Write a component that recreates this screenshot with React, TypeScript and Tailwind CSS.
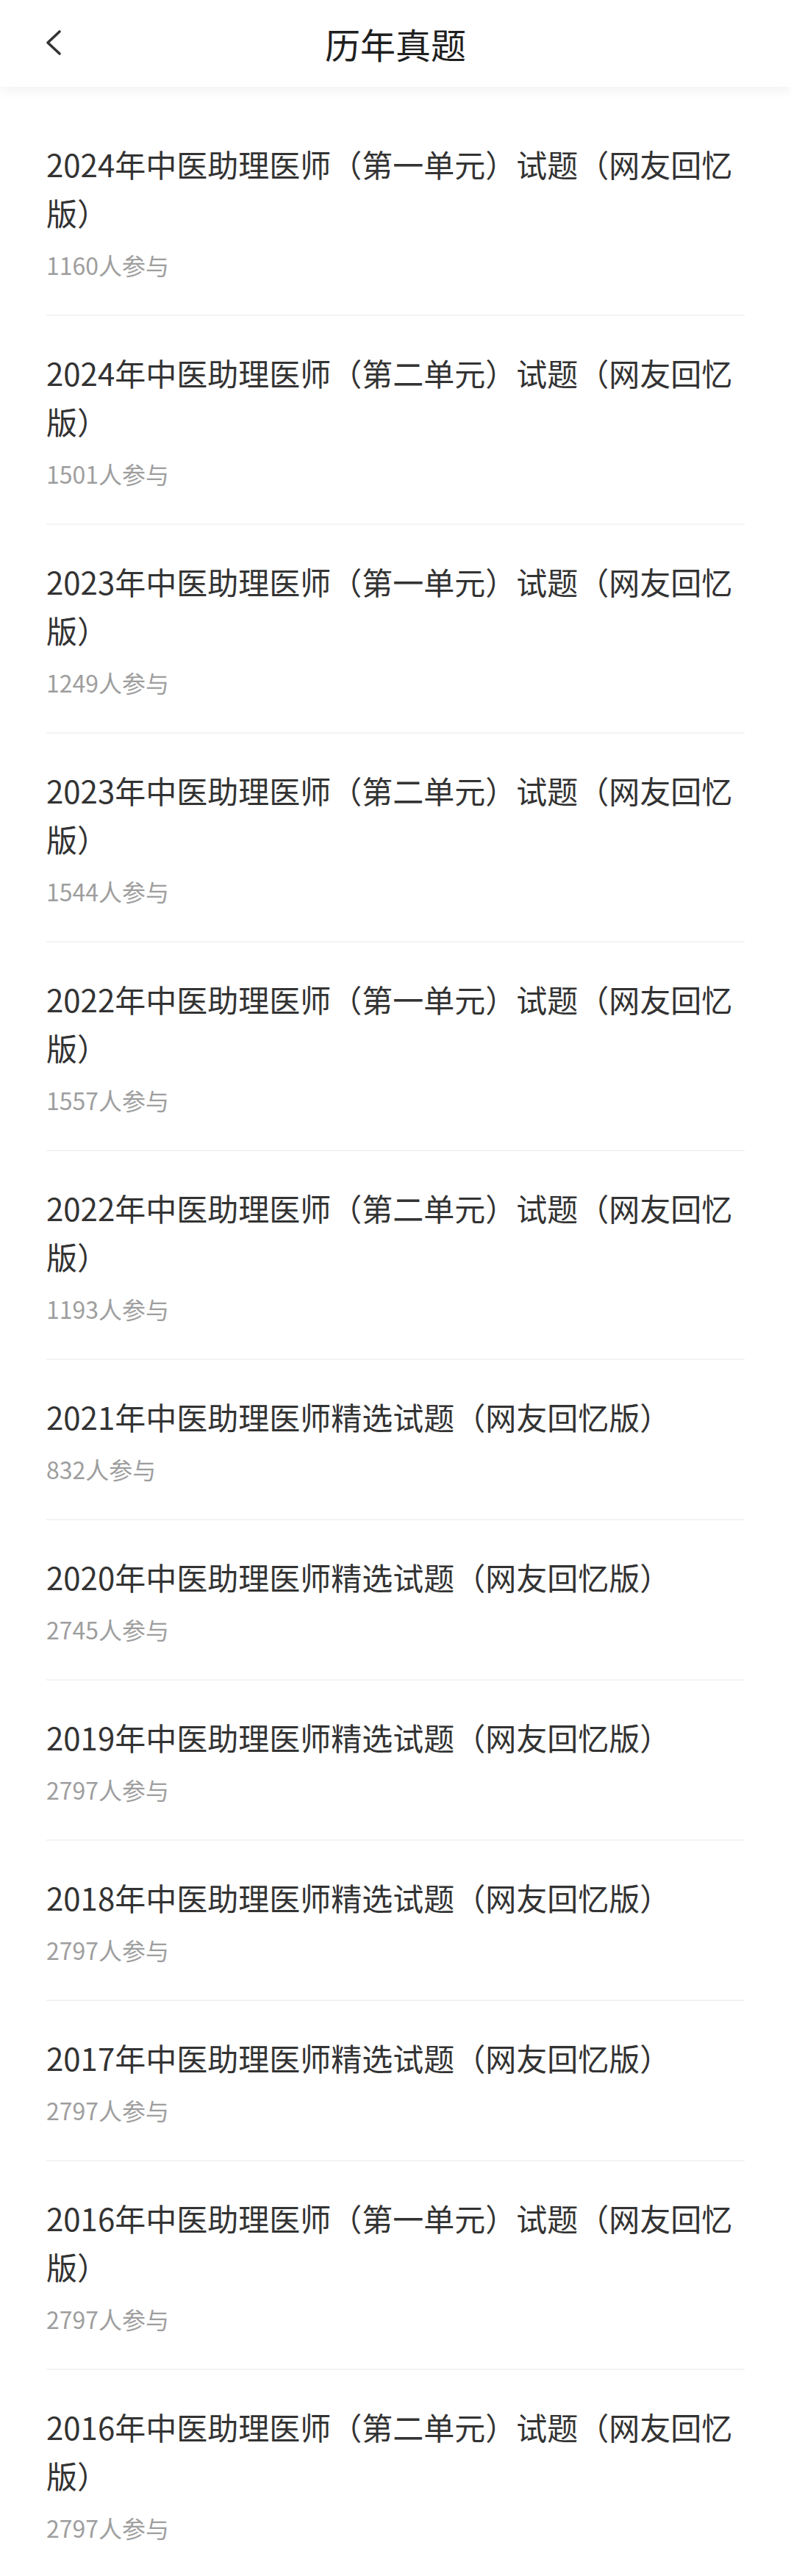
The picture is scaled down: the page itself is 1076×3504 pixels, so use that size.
const papers: { title: string; count: number }[] = [
  { title: "2024年中医助理医师（第一单元）试题（网友回忆版）", count: 1160 },
  { title: "2024年中医助理医师（第二单元）试题（网友回忆版）", count: 1501 },
  { title: "2023年中医助理医师（第一单元）试题（网友回忆版）", count: 1249 },
  { title: "2023年中医助理医师（第二单元）试题（网友回忆版）", count: 1544 },
  { title: "2022年中医助理医师（第一单元）试题（网友回忆版）", count: 1557 },
  { title: "2022年中医助理医师（第二单元）试题（网友回忆版）", count: 1193 },
  { title: "2021年中医助理医师精选试题（网友回忆版）", count: 832 },
  { title: "2020年中医助理医师精选试题（网友回忆版）", count: 2745 },
  { title: "2019年中医助理医师精选试题（网友回忆版）", count: 2797 },
  { title: "2018年中医助理医师精选试题（网友回忆版）", count: 2797 },
  { title: "2017年中医助理医师精选试题（网友回忆版）", count: 2797 },
  { title: "2016年中医助理医师（第一单元）试题（网友回忆版）", count: 2797 },
  { title: "2016年中医助理医师（第二单元）试题（网友回忆版）", count: 2797 },
];

function BackIcon() {
  return (
    <svg width="24" height="36" viewBox="0 0 24 36" fill="none" aria-hidden="true">
      <polyline
        points="20,3 4,18 20,33"
        stroke="#333"
        strokeWidth="3.6"
        strokeLinecap="round"
        strokeLinejoin="round"
      />
    </svg>
  );
}

export default function App() {
  return (
    <div className="min-h-screen bg-white font-['Noto_Sans_CJK_SC','Noto_Sans',sans-serif]">
      <header className="relative z-10 flex h-[118px] items-center justify-center bg-white shadow-[0_6px_14px_rgba(0,0,0,0.05)]">
        <button className="absolute left-[61px] top-[40px]" aria-label="返回">
          <BackIcon />
        </button>
        <h1 className="text-[48px] leading-none text-[#1f1f1f]">历年真题</h1>
      </header>

      <ul className="px-[63px] pt-[28px]">
        {papers.map((p, i) => (
          <li key={i} className="border-b-2 border-[#f3f3f3] pt-[44px] pb-[46px]">
            <div className="text-[42px] leading-[66px] text-[#333]">{p.title}</div>
            <div className="mt-[16px] text-[32px] leading-[44px] text-[#9e9e9e]">{p.count}人参与</div>
          </li>
        ))}
      </ul>
    </div>
  );
}
